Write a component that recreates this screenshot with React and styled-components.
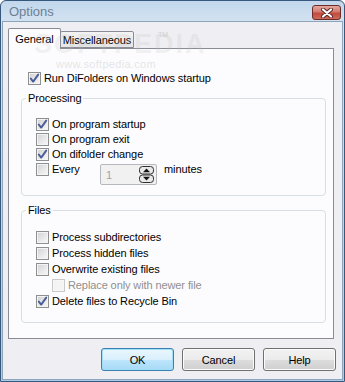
import styled, { createGlobalStyle } from 'styled-components';

const GlobalStyle = createGlobalStyle`
  html, body {
    margin: 0;
    padding: 0;
    background: #ffffff;
  }
  body {
    font-family: "Liberation Sans", Arial, sans-serif;
    font-size: 11px;
    letter-spacing: -0.1px;
    color: #000;
  }
`;

const Window = styled.div`
  position: relative;
  width: 345px;
  height: 382px;
  box-sizing: border-box;
  border: 1px solid #36587c;
  border-radius: 6px 6px 0 0;
  padding: 0 1px 1px;
  background: linear-gradient(180deg, #c2d7ec 0%, #d4e3f1 22px, #a9cde9 100%);
  display: flex;
  flex-direction: column;
  overflow: hidden;
`;

const TitleBar = styled.div`
  height: 20px;
  display: flex;
  align-items: flex-start;
  padding-left: 7px;
`;

const Title = styled.div`
  font-size: 13px;
  letter-spacing: 0;
  line-height: 21px;
  color: #6e7f95;
`;

const CloseButton = styled.div`
  margin-left: auto;
  margin-right: 2px;
  margin-top: 4px;
  width: 29px;
  height: 15px;
  box-sizing: border-box;
  border: 1px solid #6e2b27;
  border-radius: 3px;
  background: linear-gradient(180deg, #e3a99f 0%, #d27a6f 45%, #c24a3f 55%, #cc6a58 100%);
  display: flex;
  align-items: center;
  justify-content: center;
`;

const Body = styled.div`
  flex: 1;
  background: #efeef2;
  border: 1px solid #8ea4ba;
  padding: 6px 0 0 5px;
  display: flex;
  flex-direction: column;
`;

const TabStrip = styled.div`
  height: 21px;
  margin-bottom: -1px;
  display: flex;
  align-items: flex-end;
  position: relative;
  z-index: 1;
`;

const Tab = styled.div`
  box-sizing: border-box;
  height: ${(p) => (p.$active ? '21px' : '17px')};
  margin-bottom: ${(p) => (p.$active ? '0' : '1px')};
  margin-left: ${(p) => (p.$active ? '0' : '-1px')};
  width: ${(p) => p.$w}px;
  padding: ${(p) => (p.$active ? '3px 0 0 0' : '1px 0 0 0')};
  text-align: center;
  border: 1px solid #898c95;
  border-bottom: ${(p) => (p.$active ? 'none' : '1px solid #898c95')};
  border-radius: 2px 2px 0 0;
  background: ${(p) => (p.$active ? '#fcfcfe' : 'linear-gradient(180deg, #f3f3f3 0%, #e6e6e6 100%)')};
  line-height: 14px;
  white-space: nowrap;
  position: relative;
  z-index: ${(p) => (p.$active ? 2 : 1)};
`;

const Panel = styled.div`
  width: 326px;
  height: 291px;
  box-sizing: border-box;
  border: 1px solid #898c95;
  background: #fcfcfe;
  padding: 22px 0 0 12px;
  display: flex;
  flex-direction: column;
`;

const Group = styled.div`
  position: relative;
  width: 305px;
  box-sizing: border-box;
  margin-top: ${(p) => p.$top}px;
  border: 1px solid #d5dfe5;
  border-radius: 4px;
  padding: ${(p) => p.$pad};
  display: flex;
  flex-direction: column;
`;

const GroupLabel = styled.div`
  position: absolute;
  top: -8px;
  left: 4px;
  padding: 0 2px;
  line-height: 15px;
  background: #fcfcfe;
`;

const Row = styled.div`
  display: flex;
  align-items: flex-start;
  height: ${(p) => p.$h || 15}px;
  padding-left: ${(p) => p.$indent || 0}px;
`;

const Box = styled.div`
  flex: none;
  width: 13px;
  height: 13px;
  margin-top: 1px;
  box-sizing: border-box;
  border: 1px solid ${(p) => (p.$disabled ? '#c9c9c9' : '#8e8f8f')};
  box-shadow: inset 0 0 0 1px ${(p) => (p.$disabled ? '#f7f7f7' : '#f4f4f4')};
  background: ${(p) =>
    p.$disabled
      ? '#f4f4f4'
      : 'linear-gradient(135deg, #cfd0d2 0%, #e6e6e7 50%, #f8f8f8 100%)'};
  display: flex;
  align-items: center;
  justify-content: center;
`;

const Label = styled.span`
  margin-left: 3px;
  line-height: 15px;
  white-space: nowrap;
  color: ${(p) => (p.$disabled ? '#8f8f8f' : '#000')};
  width: ${(p) => (p.$w ? `${p.$w}px` : 'auto')};
`;

const Spinner = styled.div`
  margin-top: 2px;
  width: 57px;
  height: 21px;
  box-sizing: border-box;
  border: 1px solid #b5b8bd;
  border-radius: 2px;
  background: #f1f1f1;
  display: flex;
  align-items: center;
  padding: 0 2px 0 5px;
  color: #a3a3a3;
`;

const SpinValue = styled.span`
  flex: 1;
`;

const Minutes = styled.span`
  margin-left: 7px;
  line-height: 15px;
`;

const ButtonRow = styled.div`
  width: 328px;
  margin-top: 9px;
  display: flex;
  justify-content: flex-end;
  gap: 8px;
`;

const Button = styled.button`
  width: 73px;
  height: 23px;
  box-sizing: border-box;
  border: 1px solid ${(p) => (p.$default ? '#3c7fb1' : '#707070')};
  border-radius: 3px;
  font-family: inherit;
  font-size: 11px;
  letter-spacing: -0.1px;
  color: #000;
  padding: 0;
  background: ${(p) =>
    p.$default
      ? 'linear-gradient(180deg, #eaf6fd 0%, #d9f0fc 50%, #bee6fd 51%, #a7d9f5 100%)'
      : 'linear-gradient(180deg, #f2f2f2 0%, #ebebeb 50%, #dddddd 51%, #cfcfcf 100%)'};
  box-shadow: inset 0 0 0 1px ${(p) => (p.$default ? '#9fe0f7' : '#fbfbfb')};
`;

const Watermark = styled.div`
  position: absolute;
  left: ${(p) => p.$x}px;
  top: ${(p) => p.$y}px;
  font-size: ${(p) => p.$size}px;
  font-weight: ${(p) => p.$weight || 400};
  letter-spacing: ${(p) => p.$ls || 0}px;
  color: ${(p) => p.$color};
  pointer-events: none;
  white-space: nowrap;
  z-index: 3;
`;

const CheckBox = ({ checked, disabled }) => (
  <Box $disabled={disabled}>
    {checked && (
      <svg width="11" height="11" viewBox="0 0 11 11">
        <path d="M1.8 5.6 L4.2 8.6 L9.2 1.6" fill="none" stroke="#4a5d98" strokeWidth="1.9" strokeLinecap="round" strokeLinejoin="round" />
      </svg>
    )}
  </Box>
);

const Option = ({ checked, disabled, indent, h, children }) => (
  <Row $indent={indent} $h={h}>
    <CheckBox checked={checked} disabled={disabled} />
    <Label $disabled={disabled}>{children}</Label>
  </Row>
);

const SpinArrows = () => (
  <svg width="15" height="17" viewBox="0 0 15 17">
    <rect x="0.5" y="0.5" width="14" height="7.5" rx="3" fill="#e9e9e9" stroke="#2f2f2f" />
    <rect x="0.5" y="9" width="14" height="7.5" rx="3" fill="#e9e9e9" stroke="#2f2f2f" />
    <path d="M4 6.2 L7.5 2.6 L11 6.2 Z" fill="#111" />
    <path d="M4 10.8 L7.5 14.4 L11 10.8 Z" fill="#111" />
  </svg>
);

const CloseGlyph = () => (
  <svg width="14" height="10" viewBox="0 0 14 10">
    <path d="M3 1.5 L11 8.5 M11 1.5 L3 8.5" stroke="#5b2320" strokeWidth="4" strokeLinecap="round" />
    <path d="M3 1.5 L11 8.5 M11 1.5 L3 8.5" stroke="#ffffff" strokeWidth="2.2" strokeLinecap="round" />
  </svg>
);

export default function App() {
  return (
    <>
      <GlobalStyle />
      <Window>
        <TitleBar>
          <Title>Options</Title>
          <CloseButton>
            <CloseGlyph />
          </CloseButton>
        </TitleBar>
        <Body>
          <TabStrip>
            <Tab $active $w={53}>General</Tab>
            <Tab $w={74}>Miscellaneous</Tab>
          </TabStrip>
          <Panel>
            <Option checked indent={7}>Run DiFolders on Windows startup</Option>

            <Group $top={12} $pad="18px 0 10px 14px">
              <GroupLabel>Processing</GroupLabel>
              <Option checked>On program startup</Option>
              <Option>On program exit</Option>
              <Option checked>On difolder change</Option>
              <Row $h={23}>
                <CheckBox />
                <Label $w={48}>Every</Label>
                <Spinner>
                  <SpinValue>1</SpinValue>
                  <SpinArrows />
                </Spinner>
                <Minutes>minutes</Minutes>
              </Row>
            </Group>

            <Group $top={14} $pad="19px 0 13px 14px">
              <GroupLabel>Files</GroupLabel>
              <Option h={16}>Process subdirectories</Option>
              <Option h={16}>Process hidden files</Option>
              <Option h={16}>Overwrite existing files</Option>
              <Option h={16} indent={16} disabled>Replace only with newer file</Option>
              <Option h={15} checked>Delete files to Recycle Bin</Option>
            </Group>
          </Panel>
          <ButtonRow>
            <Button $default>OK</Button>
            <Button>Cancel</Button>
            <Button>Help</Button>
          </ButtonRow>
        </Body>
        <Watermark $x={33} $y={28} $size={27} $weight={700} $ls={2} $color="rgba(190,190,190,0.2)">SOFTPEDIA</Watermark>
        <Watermark $x={157} $y={30} $size={7} $color="rgba(170,170,170,0.45)">TM</Watermark>
        <Watermark $x={55} $y={57} $size={11} $ls={0.3} $color="rgba(180,180,180,0.35)">www.softpedia.com</Watermark>
      </Window>
    </>
  );
}
